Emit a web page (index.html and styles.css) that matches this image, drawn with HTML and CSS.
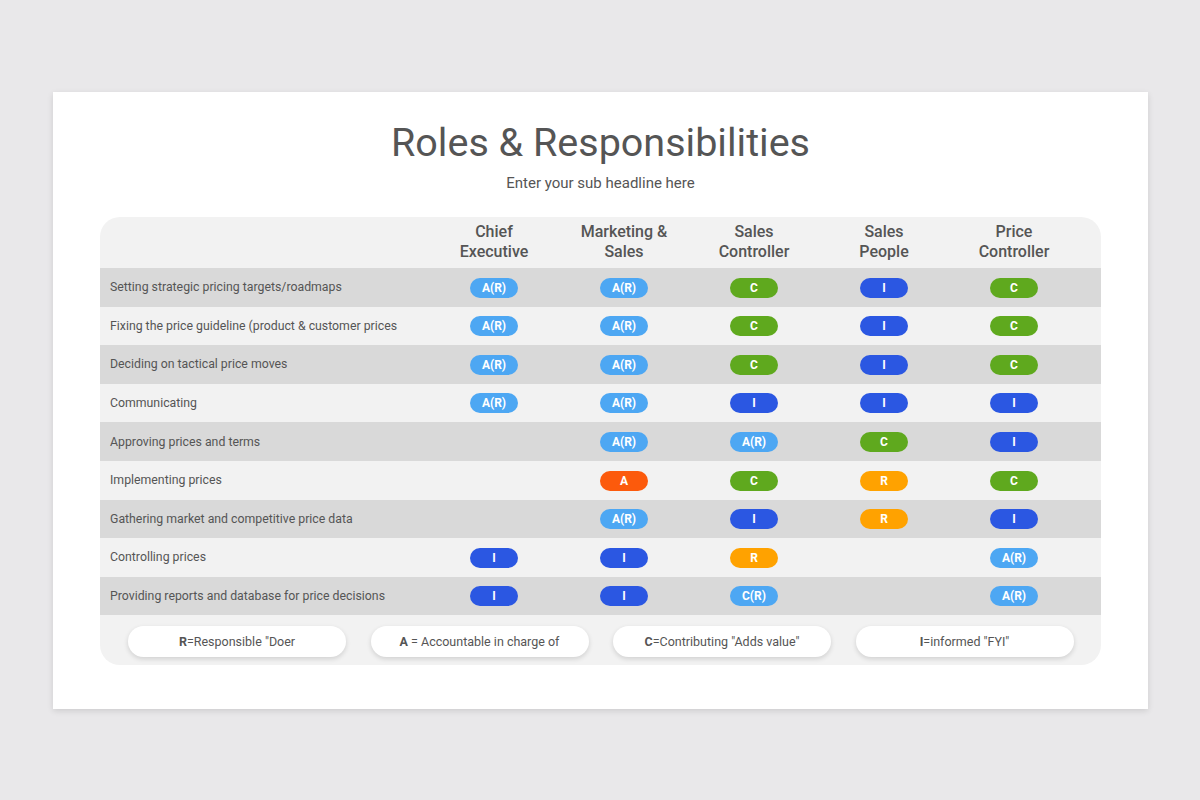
FILE: index.html
```html
<!DOCTYPE html>
<html>
<head>
<meta charset="utf-8">
<link rel="stylesheet" href="styles.css">
</head>
<body>
<div class="slide">
  <h1 class="title">Roles &amp; Responsibilities</h1>
  <p class="subtitle">Enter your sub headline here</p>
  <div class="table">
    <div class="row head">
      <div class="label"></div>
      <div class="cell">Chief<br>Executive</div>
      <div class="cell">Marketing &amp;<br>Sales</div>
      <div class="cell">Sales<br>Controller</div>
      <div class="cell">Sales<br>People</div>
      <div class="cell">Price<br>Controller</div>
    </div>
    <div class="row dark">
      <div class="label">Setting strategic pricing targets/roadmaps</div>
      <div class="cell"><span class="pill lb">A(R)</span></div>
      <div class="cell"><span class="pill lb">A(R)</span></div>
      <div class="cell"><span class="pill gr">C</span></div>
      <div class="cell"><span class="pill bl">I</span></div>
      <div class="cell"><span class="pill gr">C</span></div>
    </div>
    <div class="row">
      <div class="label">Fixing the price guideline (product &amp; customer prices</div>
      <div class="cell"><span class="pill lb">A(R)</span></div>
      <div class="cell"><span class="pill lb">A(R)</span></div>
      <div class="cell"><span class="pill gr">C</span></div>
      <div class="cell"><span class="pill bl">I</span></div>
      <div class="cell"><span class="pill gr">C</span></div>
    </div>
    <div class="row dark">
      <div class="label">Deciding on tactical price moves</div>
      <div class="cell"><span class="pill lb">A(R)</span></div>
      <div class="cell"><span class="pill lb">A(R)</span></div>
      <div class="cell"><span class="pill gr">C</span></div>
      <div class="cell"><span class="pill bl">I</span></div>
      <div class="cell"><span class="pill gr">C</span></div>
    </div>
    <div class="row">
      <div class="label">Communicating</div>
      <div class="cell"><span class="pill lb">A(R)</span></div>
      <div class="cell"><span class="pill lb">A(R)</span></div>
      <div class="cell"><span class="pill bl">I</span></div>
      <div class="cell"><span class="pill bl">I</span></div>
      <div class="cell"><span class="pill bl">I</span></div>
    </div>
    <div class="row dark">
      <div class="label">Approving prices and terms</div>
      <div class="cell"></div>
      <div class="cell"><span class="pill lb">A(R)</span></div>
      <div class="cell"><span class="pill lb">A(R)</span></div>
      <div class="cell"><span class="pill gr">C</span></div>
      <div class="cell"><span class="pill bl">I</span></div>
    </div>
    <div class="row">
      <div class="label">Implementing prices</div>
      <div class="cell"></div>
      <div class="cell"><span class="pill rd">A</span></div>
      <div class="cell"><span class="pill gr">C</span></div>
      <div class="cell"><span class="pill or">R</span></div>
      <div class="cell"><span class="pill gr">C</span></div>
    </div>
    <div class="row dark">
      <div class="label">Gathering market and competitive price data</div>
      <div class="cell"></div>
      <div class="cell"><span class="pill lb">A(R)</span></div>
      <div class="cell"><span class="pill bl">I</span></div>
      <div class="cell"><span class="pill or">R</span></div>
      <div class="cell"><span class="pill bl">I</span></div>
    </div>
    <div class="row">
      <div class="label">Controlling prices</div>
      <div class="cell"><span class="pill bl">I</span></div>
      <div class="cell"><span class="pill bl">I</span></div>
      <div class="cell"><span class="pill or">R</span></div>
      <div class="cell"></div>
      <div class="cell"><span class="pill lb">A(R)</span></div>
    </div>
    <div class="row dark">
      <div class="label">Providing reports and database for price decisions</div>
      <div class="cell"><span class="pill bl">I</span></div>
      <div class="cell"><span class="pill bl">I</span></div>
      <div class="cell"><span class="pill lb">C(R)</span></div>
      <div class="cell"></div>
      <div class="cell"><span class="pill lb">A(R)</span></div>
    </div>
    <div class="legend">
      <div class="key"><b>R</b>=Responsible "Doer</div>
      <div class="key"><b>A</b> = Accountable in charge of</div>
      <div class="key"><b>C</b>=Contributing "Adds value"</div>
      <div class="key"><b>I</b>=informed "FYI"</div>
    </div>
  </div>
</div>
</body>
</html>
```

FILE: styles.css
```css
html, body {
  margin: 0;
  padding: 0;
}
body {
  background: #e9e8ea;
  font-family: Roboto, "Liberation Sans", sans-serif;
  color: #555;
  width: 1200px;
  height: 800px;
  padding-top: 92px;
  box-sizing: border-box;
}
.slide {
  width: 1095px;
  height: 617px;
  margin-left: 53px;
  background: #fff;
  box-shadow: 0 2px 6px rgba(0,0,0,0.12);
  box-sizing: border-box;
  padding: 25px 47px 0 47px;
  display: flex;
  flex-direction: column;
  align-items: center;
}
.title {
  margin: 0;
  font-weight: 400;
  font-size: 39.5px;
  line-height: 52px;
  color: #555;
}
.subtitle {
  margin: 4px 0 0 0;
  font-size: 15px;
  line-height: 20px;
  color: #555;
}
.table {
  margin-top: 24px;
  width: 1001px;
  background: #f2f2f2;
  border-radius: 20px;
  overflow: hidden;
  display: flex;
  flex-direction: column;
}
.row {
  display: grid;
  grid-template-columns: 329px repeat(5, 130px) 22px;
  height: 38.6px;
  align-items: center;
}
.row.dark {
  background: #d9d9d9;
}
.row.head {
  height: 51px;
  padding-bottom: 2px;
  box-sizing: border-box;
}
.head .cell {
  font-weight: 500;
  font-size: 16px;
  line-height: 20px;
  color: #555;
}
.label {
  padding-left: 10px;
  font-size: 12.3px;
  color: #555;
  white-space: nowrap;
}
.cell {
  text-align: center;
}
.pill {
  display: inline-block;
  width: 48px;
  height: 20px;
  line-height: 20px;
  border-radius: 10px;
  color: #fff;
  font-weight: 700;
  font-size: 12px;
  text-align: center;
  vertical-align: middle;
}
.lb { background: #4da7f3; }
.gr { background: #5fa91e; }
.bl { background: #2b57e2; }
.or { background: #ffa200; }
.rd { background: #fc5a0c; }
.legend {
  height: 50px;
  display: flex;
  align-items: center;
  justify-content: flex-start;
  gap: 24.5px;
  padding-left: 28px;
  padding-top: 2px;
  box-sizing: border-box;
}
.key {
  width: 218px;
  height: 31px;
  line-height: 31px;
  background: #fff;
  border-radius: 16px;
  box-shadow: 0 2px 5px rgba(0,0,0,0.14);
  text-align: center;
  font-size: 12.5px;
  color: #555;
}
.key b {
  font-weight: 700;
}
```
